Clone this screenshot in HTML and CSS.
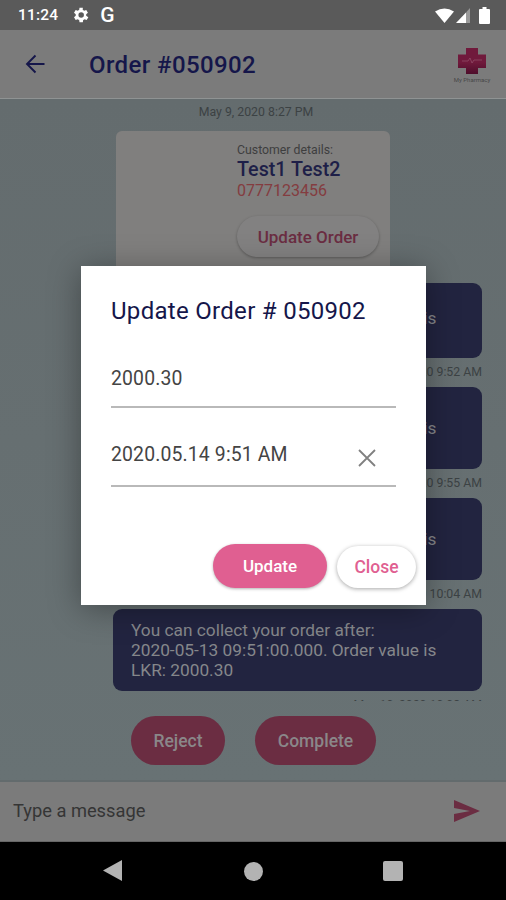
FILE: index.html
```html
<!DOCTYPE html>
<html lang="en">
<head>
<meta charset="utf-8">
<title>Order #050902</title>
<link rel="stylesheet" href="styles.css">
</head>
<body>
<div class="screen">
  <div class="status">
    <div class="status-left">
      <span class="clock">11:24</span>
      <svg class="gear" viewBox="0 0 24 24" width="20" height="20"><path fill="#fff" fill-rule="evenodd" d="M19.400 13a7.500 7.500 0 0 0 0-2l2.100-1.600-2-3.500-2.500 1a7.500 7.500 0 0 0-1.700-1L15.400 3.300h-4l-.4 2.600a7.500 7.500 0 0 0-1.700 1l-2.500-1-2 3.500L6.900 11a7.500 7.500 0 0 0 0 2l-2.100 1.600 2 3.500 2.500-1a7.500 7.500 0 0 0 1.700 1l.4 2.600h4l.4-2.600a7.500 7.500 0 0 0 1.700-1l2.500 1 2-3.500zM13.400 15.300a3.300 3.300 0 1 1 0-6.600 3.300 3.300 0 0 1 0 6.600z"/></svg>
      <span class="g">G</span>
    </div>
    <div class="status-right">
      <svg viewBox="0 0 19 15" width="19" height="15"><path fill="#fff" d="M0 3.500Q9.500-2.500 19 3.500L9.500 15z"/></svg>
      <svg viewBox="0 0 15 15" width="15" height="15"><path fill="#fff" d="M0 15L10 4.500V15z"/><path fill="#9a9a9a" d="M10 4.500L14 0v15h-4z"/></svg>
      <svg class="battery" viewBox="0 0 11 17" width="11" height="17"><path fill="#fff" d="M3.500 0h4v2H10a1 1 0 0 1 1 1v13a1 1 0 0 1-1 1H1a1 1 0 0 1-1-1V3a1 1 0 0 1 1-1h2.500z"/></svg>
    </div>
  </div>

  <header class="appbar">
    <svg class="back" viewBox="0 0 24 24" width="24" height="24"><path fill="none" stroke="#15164a" stroke-width="1.900" d="M21.500 12H4M12.500 3.500L4 12l8.500 8.500"/></svg>
    <h1 class="title">Order #050902</h1>
    <div class="logo">
      <svg viewBox="0 0 28 26" width="28" height="26"><defs><linearGradient id="cross" x1="0" y1="0" x2="0" y2="1"><stop offset="0" stop-color="#701a3c"/><stop offset=".55" stop-color="#701a3c"/><stop offset="1" stop-color="#4e0d2a"/></linearGradient></defs><path fill="url(#cross)" d="M8 0h12v6.500h8v13.500h-8v6H8v-6H0V6.500h8z"/><path fill="none" stroke="#9a5a74" stroke-width=".6" d="M4 13h6l2-3 2 5 2-3h8"/></svg>
      <span class="logo-text">My Pharmacy</span>
    </div>
  </header>

  <main class="chat">
    <div class="messages">
      <p class="day">May 9, 2020 8:27 PM</p>
      <section class="card">
        <div class="card-body">
          <span class="card-label">Customer details:</span>
          <span class="card-name">Test1 Test2</span>
          <span class="card-phone">0777123456</span>
          <span class="card-btn">Update Order</span>
        </div>
      </section>
      <article class="bubble first">You can collect your order after: <span class="nowrap">2020-05-13</span> 09:51:00.000. Order value is LKR: 2000.30</article>
      <p class="stamp">May 10, 2020 9:52 AM</p>
      <article class="bubble">You can collect your order after: <span class="nowrap">2020-05-13</span> 09:51:00.000. Order value is LKR: 2000.30</article>
      <p class="stamp">May 10, 2020 9:55 AM</p>
      <article class="bubble">You can collect your order after: <span class="nowrap">2020-05-13</span> 09:51:00.000. Order value is LKR: 2000.30</article>
      <p class="stamp">May 10, 2020 10:04 AM</p>
      <article class="bubble">You can collect your order after: <span class="nowrap">2020-05-13</span> 09:51:00.000. Order value is LKR: 2000.30</article>
      <p class="stamp">May 10, 2020 10:08 AM</p>
    </div>
    <div class="actions">
      <span class="action reject">Reject</span>
      <span class="action complete">Complete</span>
    </div>
  </main>

  <footer class="composer">
    <span class="placeholder">Type a message</span>
    <svg class="send" viewBox="0 0 26 22" width="26" height="22"><path fill="#6b2d42" d="M0 0l26 11L0 22l0-8 16-3L0 8z"/></svg>
  </footer>

  <nav class="navbar">
    <svg viewBox="0 0 20 22" width="20" height="22"><path fill="#b3b3b3" d="M19 0v21L0 10.500z"/></svg>
    <svg viewBox="0 0 20 20" width="19" height="19"><circle cx="10" cy="10" r="10" fill="#b3b3b3"/></svg>
    <svg viewBox="0 0 20 20" width="20" height="20"><rect width="20" height="20" rx="2" fill="#b3b3b3"/></svg>
  </nav>

  <div class="dialog">
    <h2 class="dialog-title">Update Order # 050902</h2>
    <div class="field field-value"><span>2000.30</span></div>
    <div class="field field-date">
      <span>2020.05.14 9:51 AM</span>
      <svg class="clear" viewBox="0 0 18 18" width="18" height="18"><path fill="none" stroke="#808080" stroke-width="1.800" d="M1 1l16 16M17 1L1 17"/></svg>
    </div>
    <div class="dialog-actions">
      <span class="btn-update">Update</span>
      <span class="btn-close">Close</span>
    </div>
  </div>
</div>
</body>
</html>
```

FILE: styles.css
```css
* { box-sizing: border-box; }
html, body { margin: 0; padding: 0; }
body { width: 506px; height: 900px; overflow: hidden; font-family: Roboto, "Liberation Sans", sans-serif; }
h1, h2, p { margin: 0; font-weight: 500; }
.nowrap { white-space: nowrap; }

.screen { position: relative; width: 506px; height: 900px; display: flex; flex-direction: column; overflow: hidden; background: #666f70; }

.status { height: 30px; flex: none; background: #5a5a5a; display: flex; justify-content: space-between; align-items: center; padding: 0 16px 0 18px; color: #fff; }
.status-left { display: flex; align-items: center; gap: 9px; }
.clock { font-size: 15.500px; font-weight: 500; letter-spacing: .2px; margin-right: 3px; }
.g { font-size: 21px; font-weight: 500; margin-left: 1px; }
.status-right { display: flex; align-items: center; gap: 2px; }
.battery { margin-left: 6px; }

.appbar { height: 69px; flex: none; background: #7b7b7b; border-bottom: 1px solid #8f9393; display: flex; align-items: center; padding: 0 20px 0 23px; }
.back { flex: none; }
.title { font-size: 24px; color: #15164a; margin: 2px 0 0 42px; flex: 1; letter-spacing: .4px; }
.logo { width: 28px; display: flex; flex-direction: column; align-items: center; gap: 2px; margin-top: 2px; }
.logo-text { font-size: 6px; color: #484848; white-space: nowrap; }

.chat { flex: 1; min-height: 0; display: flex; flex-direction: column; background: linear-gradient(#646c6e, #687274); }
.messages { height: 602px; flex: none; overflow: hidden; padding: 6px 24px 0 113px; }
.day { font-size: 12.300px; font-weight: 400; color: #3c4244; text-align: center; margin-left: -107px; margin-right: -24px; line-height: 14px; }
.card { width: 274px; height: 158px; margin: 12px 0 0 3px; background: #807f7e; border-radius: 6px; padding: 12px 0 0 121px; }
.card-body { display: flex; flex-direction: column; align-items: flex-start; }
.card-label { font-size: 12.300px; color: #3e3e3e; line-height: 15px; }
.card-name { font-size: 19.700px; font-weight: 500; color: #1e1f48; line-height: 23px; }
.card-phone { font-size: 16px; color: #843c40; line-height: 19px; }
.card-btn { width: 142px; height: 41px; margin-top: 16px; border-radius: 21px; background: #828181; box-shadow: 0 1px 3px rgba(0,0,0,.3); color: #6b2d42; font-size: 17px; font-weight: 500; display: flex; align-items: center; justify-content: center; }

.bubble { height: 82px; border-radius: 9px; background: #222440; color: #85878b; font-size: 17.300px; line-height: 20px; padding: 11px 30px 0 18px; }
.first { height: 75px; margin-top: -6px; padding-top: 5px; }
.stamp { font-size: 12.300px; font-weight: 400; color: #3c4244; text-align: right; line-height: 14px; height: 14px; margin: 7px 0 8px; }

.actions { display: flex; gap: 30px; padding: 15px 0 0 131px; }
.action { height: 49px; border-radius: 25px; background: #6b2d42; color: #8a8789; font-size: 17.500px; font-weight: 500; display: flex; align-items: center; justify-content: center; }
.reject { width: 94px; }
.complete { width: 121px; }

.composer { height: 62px; flex: none; background: #7b7b7b; border-top: 2px solid #636b6d; border-bottom: 1px solid #666; display: flex; align-items: center; justify-content: space-between; padding: 0 26px 2px 13px; }
.placeholder { font-size: 18.300px; color: #353535; }

.navbar { height: 58px; flex: none; background: #000; display: flex; align-items: center; justify-content: space-between; padding: 0 103px; }

.dialog { position: absolute; left: 81px; top: 266px; width: 345px; height: 339px; background: #fff; box-shadow: 0 4px 30px rgba(0,0,0,.35); padding: 30px 30px 0; display: flex; flex-direction: column; }
.dialog-title { font-size: 24px; font-weight: 450; color: #15164a; line-height: 30px; white-space: nowrap; letter-spacing: .3px; }
.field { display: flex; justify-content: space-between; width: 285px; border-bottom: 2px solid #b9b9b9; color: #444; font-size: 19.400px; letter-spacing: .15px; line-height: 24px; }
.field-value { height: 67px; margin-top: 15px; padding-top: 26px; }
.field-date { height: 79px; padding-top: 35px; }
.clear { margin: 6px 20px 0 0; }
.dialog-actions { display: flex; gap: 10px; justify-content: flex-end; align-items: flex-end; margin: 57px -20px 0 0; }
.btn-update { width: 114px; height: 44px; border-radius: 22px; background: #e05f91; color: #fff; font-size: 17px; font-weight: 500; display: flex; align-items: center; justify-content: center; box-shadow: 0 1px 3px rgba(0,0,0,.3); }
.btn-close { width: 79px; height: 42px; border-radius: 21px; background: #fff; color: #e05f91; font-size: 17.500px; font-weight: 500; display: flex; align-items: center; justify-content: center; box-shadow: 0 1px 4px rgba(0,0,0,.35); }
```
